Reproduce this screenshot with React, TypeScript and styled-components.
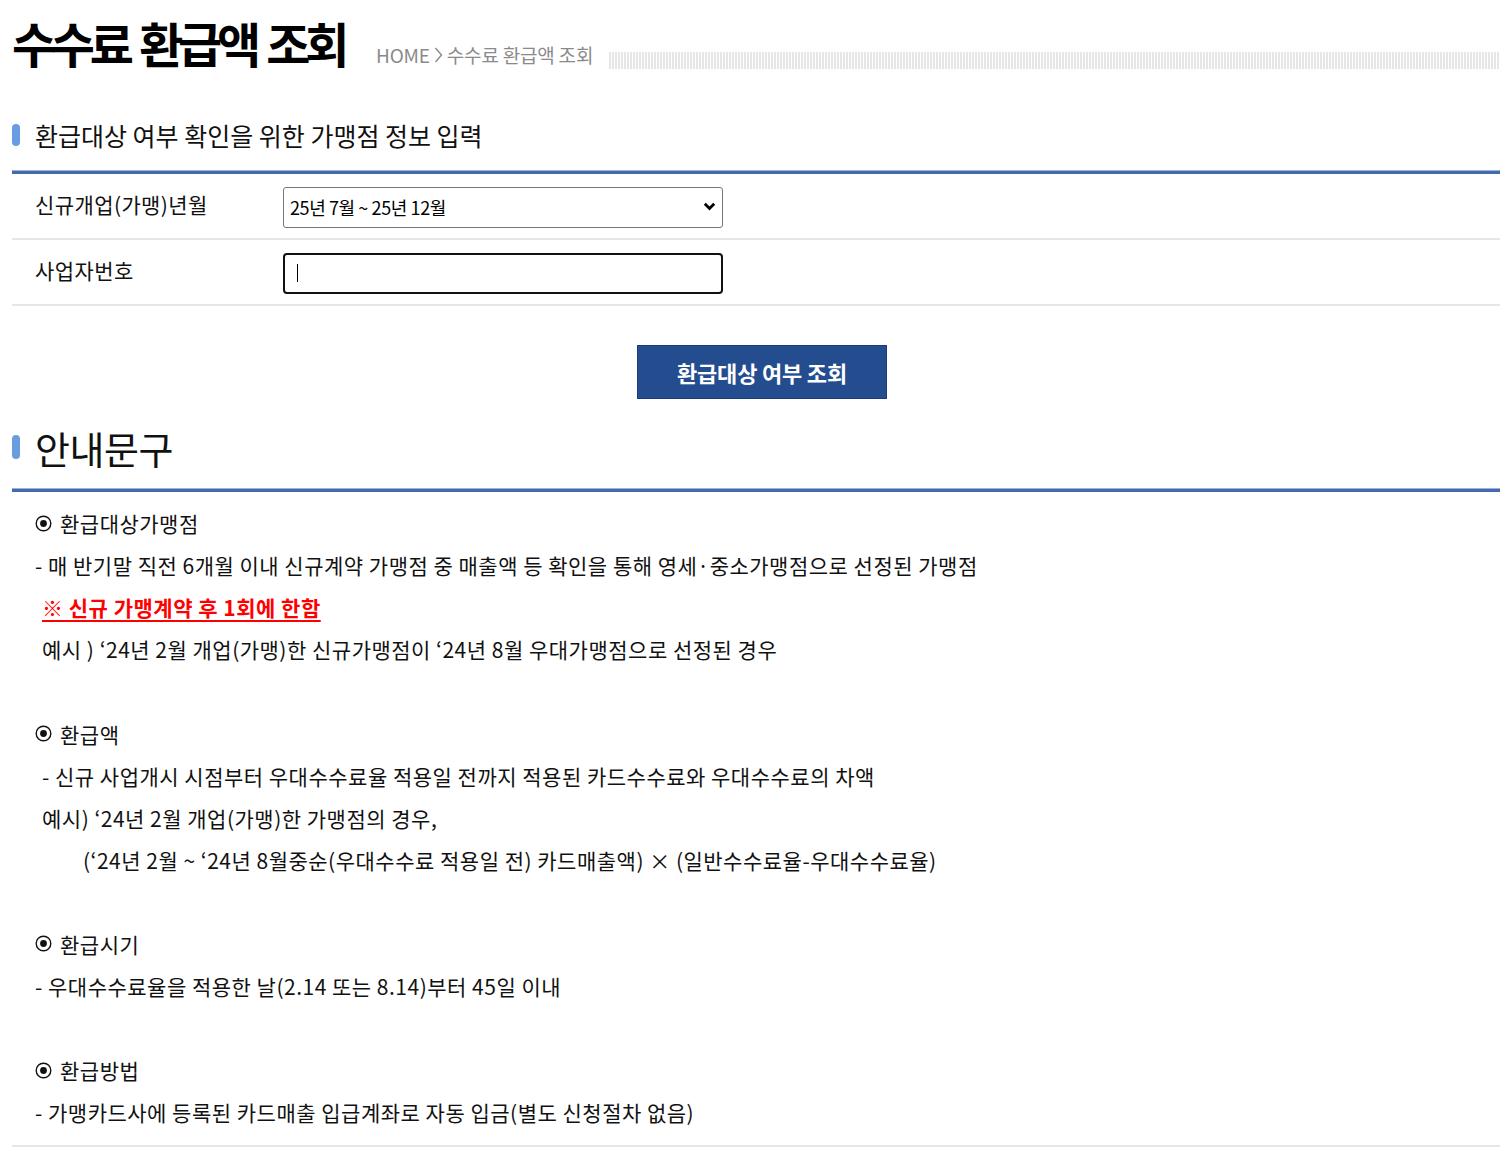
import React from 'react';
import styled, { createGlobalStyle } from 'styled-components';

const FONT = `"Noto Sans CJK KR", "Noto Sans", "Liberation Sans", sans-serif`;

const GlobalStyle = createGlobalStyle`
  html, body {
    margin: 0;
    padding: 0;
    background: #fff;
  }
  body {
    font-family: ${FONT};
    color: #222;
  }
`;

const Page = styled.div`
  width: 1500px;
  padding: 0 0 10px 12px;
  box-sizing: border-box;
`;

const Header = styled.div`
  display: flex;
  align-items: flex-end;
  height: 70px;
`;

const Title = styled.h1`
  margin: 0 0 -5px;
  font-size: 48px;
  font-weight: 700;
  letter-spacing: -5.3px;
  word-spacing: 5px;
  line-height: 66px;
  color: #000;
`;

const Crumb = styled.div`
  display: flex;
  align-items: center;
  gap: 4px;
  margin: 0 0 2px 32px;
  font-size: 19px;
  letter-spacing: -0.2px;
  line-height: 26px;
  color: #8a8a8a;
  white-space: nowrap;
`;

const Stripes = styled.div`
  flex: 1;
  height: 17px;
  margin: 0 0 1px 16px;
  background: repeating-linear-gradient(90deg, #e6e6e6 0 2px, #fff 2px 3px);
`;

const SectionHead = styled.h2<{ $big?: boolean }>`
  display: flex;
  align-items: center;
  gap: 15px;
  margin: 0;
  font-weight: 400;
  color: #111;
  font-size: ${p => (p.$big ? '38px' : '25px')};
  letter-spacing: ${p => (p.$big ? '-0.5px' : '0px')};
  height: ${p => (p.$big ? '54px' : '36px')};
  margin-top: ${p => (p.$big ? '21px' : '47px')};
  margin-bottom: ${p => (p.$big ? '14px' : '17px')};

  &::before {
    content: '';
    width: 8px;
    height: ${p => (p.$big ? '24px' : '22px')};
    border-radius: 4px;
    background: #6b9be0;
    flex: none;
  }
`;

const BlueRule = styled.div`
  height: 3px;
  background: #4469b1;
  border-top: 1px solid #9fb3d9;
`;

const FormTable = styled.div`
  display: grid;
  grid-template-columns: 271px 1fr;
`;

const Label = styled.div`
  display: flex;
  align-items: center;
  height: 66px;
  padding: 0 0 5px 23px;
  box-sizing: border-box;
  font-size: 21px;
  letter-spacing: 0.4px;
  color: #111;
  border-bottom: 2px solid #e6e6e6;
`;

const Field = styled.div`
  position: relative;
  display: flex;
  align-items: center;
  height: 66px;
  box-sizing: border-box;
  padding-top: 2px;
  border-bottom: 2px solid #e6e6e6;
`;

const Select = styled.select`
  appearance: none;
  width: 440px;
  height: 41px;
  padding: 0 6px;
  border: 1px solid #767676;
  border-radius: 3px;
  background: #fff;
  font-family: ${FONT};
  font-size: 18px;
  letter-spacing: -0.4px;
  color: #000;
`;

const SelectArrow = styled.svg`
  position: absolute;
  left: 420px;
  top: 50%;
  margin-top: -4px;
  pointer-events: none;
`;

const Input = styled.input`
  width: 440px;
  height: 41px;
  box-sizing: border-box;
  padding: 0 12px;
  border: 2px solid #111;
  border-radius: 4px;
  outline: none;
  font-family: ${FONT};
  font-size: 18px;
  caret-color: #000;
`;

const Caret = styled.span`
  position: absolute;
  left: 14px;
  top: 50%;
  margin-top: -8px;
  width: 1px;
  height: 18px;
  background: #000;
  pointer-events: none;
`;

const ButtonRow = styled.div`
  display: flex;
  justify-content: center;
  padding: 39px 0 0 12px;
`;

const SearchButton = styled.button`
  width: 250px;
  height: 54px;
  border: 1px solid #1a3d78;
  background: #234d8f;
  color: #fff;
  font-family: ${FONT};
  font-size: 22px;
  font-weight: 700;
  letter-spacing: -0.2px;
  cursor: pointer;
`;

const Notice = styled.div`
  padding: 10px 0 12px;
  border-bottom: 2px solid #e6e6e6;
`;

const Line = styled.p<{ $indent?: number }>`
  display: flex;
  align-items: center;
  gap: 8px;
  margin: 0;
  height: 42.1px;
  padding-left: ${p => 23 + (p.$indent ?? 0)}px;
  font-size: 21px;
  letter-spacing: 0.5px;
  color: #111;
  white-space: pre;
`;

const Warn = styled.span`
  color: #f00;
  font-weight: 700;
  text-decoration: underline;
  text-underline-offset: 4px;
`;

const Bullet = () => (
  <svg width="17" height="17" viewBox="0 0 17 17" aria-hidden="true">
    <circle cx="8.5" cy="8.5" r="7.3" fill="none" stroke="#111" strokeWidth="1.4" />
    <circle cx="8.5" cy="8.5" r="3.4" fill="#111" />
  </svg>
);

const Chevron = () => (
  <svg width="9" height="18" viewBox="0 0 9 18" aria-hidden="true">
    <path d="M1.5 2 L7.5 9 L1.5 16" fill="none" stroke="#8a8a8a" strokeWidth="1.4" />
  </svg>
);

export default function App() {
  return (
    <>
      <GlobalStyle />
      <Page>
        <Header>
          <Title>수수료 환급액 조회</Title>
          <Crumb>
            HOME <Chevron /> 수수료 환급액 조회
          </Crumb>
          <Stripes />
        </Header>

        <SectionHead>환급대상 여부 확인을 위한 가맹점 정보 입력</SectionHead>
        <BlueRule />
        <FormTable>
          <Label>신규개업(가맹)년월</Label>
          <Field>
            <Select defaultValue="2507">
              <option value="2507">25년 7월 ~ 25년 12월</option>
              <option value="2501">25년 1월 ~ 25년 6월</option>
            </Select>
            <SelectArrow width="13" height="9" viewBox="0 0 13 9" aria-hidden="true">
              <path d="M1.8 1.8 L6.5 6.5 L11.2 1.8" fill="none" stroke="#000" strokeWidth="2.8" />
            </SelectArrow>
          </Field>
          <Label>사업자번호</Label>
          <Field>
            <Input type="text" aria-label="사업자번호" />
            <Caret />
          </Field>
        </FormTable>

        <ButtonRow>
          <SearchButton type="button">환급대상 여부 조회</SearchButton>
        </ButtonRow>

        <SectionHead $big>안내문구</SectionHead>
        <BlueRule />
        <Notice>
          <Line><Bullet />환급대상가맹점</Line>
          <Line>- 매 반기말 직전 6개월 이내 신규계약 가맹점 중 매출액 등 확인을 통해 영세·중소가맹점으로 선정된 가맹점</Line>
          <Line $indent={7}><Warn>※ 신규 가맹계약 후 1회에 한함</Warn></Line>
          <Line $indent={7}>예시 ) ‘24년 2월 개업(가맹)한 신규가맹점이 ‘24년 8월 우대가맹점으로 선정된 경우</Line>
          <Line />
          <Line><Bullet />환급액</Line>
          <Line $indent={7}>- 신규 사업개시 시점부터 우대수수료율 적용일 전까지 적용된 카드수수료와 우대수수료의 차액</Line>
          <Line $indent={7}>예시) ‘24년 2월 개업(가맹)한 가맹점의 경우,</Line>
          <Line $indent={48}>(‘24년 2월 ~ ‘24년 8월중순(우대수수료 적용일 전) 카드매출액) × (일반수수료율-우대수수료율)</Line>
          <Line />
          <Line><Bullet />환급시기</Line>
          <Line>- 우대수수료율을 적용한 날(2.14 또는 8.14)부터 45일 이내</Line>
          <Line />
          <Line><Bullet />환급방법</Line>
          <Line>- 가맹카드사에 등록된 카드매출 입급계좌로 자동 입금(별도 신청절차 없음)</Line>
        </Notice>
      </Page>
    </>
  );
}
